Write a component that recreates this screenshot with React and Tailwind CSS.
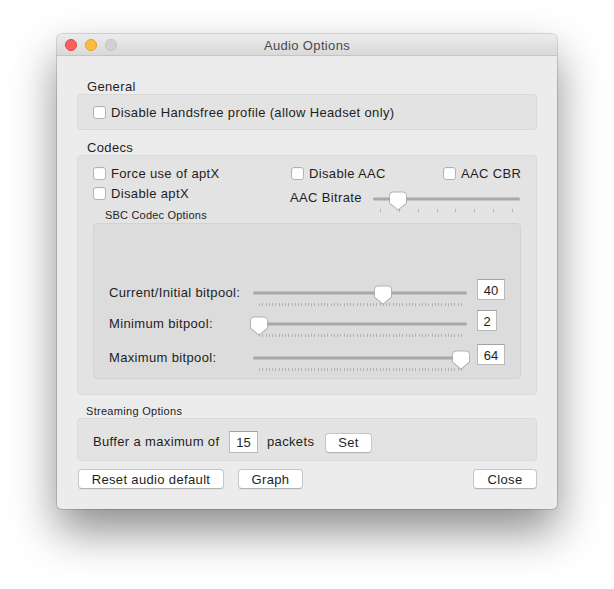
import React from "react";

const font = { fontFamily: '"Liberation Sans", Arial, sans-serif' };

function knobPath(cx) {
  return `M${cx - 5},1 H${cx + 5} Q${cx + 8.5},1 ${cx + 8.5},4.5 V12 L${cx},19 L${cx - 8.5},12 V4.5 Q${cx - 8.5},1 ${cx - 5},1 Z`;
}

function Slider({ width, trackFrom, trackTo, knob, ticks }) {
  return (
    <svg width={width} height={23} className="block shrink-0 overflow-visible">
      <rect x={trackFrom} y={6.5} width={trackTo - trackFrom} height={3} rx={1.5} fill="#a8a8a8" />
      {ticks.map((t, i) => (
        <rect key={i} x={t} y={18} width={1} height={3} fill="#b4b4b4" />
      ))}
      <path d={knobPath(knob)} transform="translate(0,0.8)" fill="rgba(0,0,0,0.12)" />
      <path d={knobPath(knob)} fill="#ffffff" stroke="#a3a3a3" strokeWidth={0.8} />
    </svg>
  );
}

const sbcTicks = Array.from({ length: 63 }, (_, i) => Math.round(9 + (i * 202) / 62));
const aacTicks = Array.from({ length: 8 }, (_, i) => Math.round(10 + i * 18.857));

function Checkbox({ label }) {
  return (
    <div className="flex h-[20px] items-center whitespace-nowrap">
      <span className="block h-[13px] w-[13px] shrink-0 rounded-[3px] border border-[#b2b2b2] bg-white shadow-[inset_0_1px_0_rgba(0,0,0,0.04)]" />
      <span className="ml-[5px] pt-[1px] text-[13px] text-[#1e1e1e]">{label}</span>
    </div>
  );
}

function MacButton({ children, w }) {
  return (
    <div
      className={`flex h-[20px] items-center justify-center rounded-[4px] border border-[#c6c6c6] border-b-[#b4b4b4] bg-white pt-[1px] text-[13px] text-[#1e1e1e] shadow-[0_1px_0_rgba(0,0,0,0.04)] ${w}`}
    >
      {children}
    </div>
  );
}

function BitpoolRow({ label, value, knob, boxW, className }) {
  return (
    <div className={`flex h-[24px] items-start ${className}`}>
      <div className="flex h-[24px] w-[141px] items-center pt-[1px] text-[13px] text-[#1e1e1e]">{label}</div>
      <div className="mt-[5px]">
        <Slider width={220} trackFrom={3} trackTo={217} knob={knob} ticks={sbcTicks} />
      </div>
      <div
        className={`ml-[7px] mt-[-1px] flex h-[21px] items-center justify-center border border-[#b9b9b9] border-t-[#a3a3a3] bg-white pt-[2px] text-[13px] tracking-normal text-[#1e1e1e] ${boxW}`}
      >
        {value}
      </div>
    </div>
  );
}

export default function App() {
  return (
    <div className="min-h-[589px] bg-white pl-[57px] pt-[34px] tracking-[0.35px]" style={font}>
      <div className="w-[500px] rounded-[5px] bg-[#ececec] shadow-[0_0_0_1px_rgba(0,0,0,0.14),0_22px_45px_rgba(0,0,0,0.45)]">
        {/* title bar */}
        <div className="relative flex h-[22px] items-center rounded-t-[5px] border-b border-[#c4c4c4] bg-gradient-to-b from-[#ececec] to-[#d9d9d9] pl-[8px]">
          <span className="block h-[12px] w-[12px] rounded-full border border-[#e0443e] bg-[#fc605b]" />
          <span className="ml-[8px] block h-[12px] w-[12px] rounded-full border border-[#dea123] bg-[#fdbc40]" />
          <span className="ml-[8px] block h-[12px] w-[12px] rounded-full border border-[#c4c4c4] bg-[#d2d2d2]" />
          <div className="absolute inset-0 flex items-center justify-center pt-[3px] text-[13px] text-[#4a4a4a]">
            Audio Options
          </div>
        </div>

        <div className="px-[20px] pb-[20px] pt-[22px]">
          {/* General */}
          <div className="ml-[10px] flex h-[16px] items-center pt-[2px] text-[13px] text-[#1e1e1e]">General</div>
          <div className="flex h-[36px] items-center rounded-[4px] border border-[#d9d9d9] bg-[#e3e3e3] pl-[15px]">
            <Checkbox label="Disable Handsfree profile (allow Headset only)" />
          </div>

          {/* Codecs */}
          <div className="ml-[10px] mt-[9px] flex h-[16px] items-center pt-[2px] text-[13px] text-[#1e1e1e]">Codecs</div>
          <div className="h-[240px] rounded-[4px] border border-[#d9d9d9] bg-[#e3e3e3] px-[15px] pt-[7px]">
            <div className="flex h-[44px]">
              <div className="w-[198px] shrink-0">
                <Checkbox label="Force use of aptX" />
                <Checkbox label="Disable aptX" />
              </div>
              <div className="min-w-0">
                <div className="flex">
                  <div className="w-[152px] shrink-0">
                    <Checkbox label="Disable AAC" />
                  </div>
                  <Checkbox label="AAC CBR" />
                </div>
                <div className="flex items-start">
                  <div className="-ml-[1px] mt-[4px] flex h-[20px] w-[80px] shrink-0 items-center whitespace-nowrap pt-[1px] text-[13px] text-[#1e1e1e]">AAC Bitrate</div>
                  <div className="mt-[8px]">
                    <Slider width={153} trackFrom={3} trackTo={150} knob={28} ticks={aacTicks} />
                  </div>
                </div>
              </div>
            </div>
            <div className="ml-[12px] flex h-[16px] items-center pt-[1px] text-[11px] tracking-[0.2px] text-[#1e1e1e]">SBC Codec Options</div>
            <div className="h-[156px] rounded-[4px] border border-[#d2d2d2] bg-[#dcdcdc] pl-[15px] pt-[56px]">
              <BitpoolRow label="Current/Initial bitpool:" value="40" knob={133} boxW="w-[28px]" />
              <BitpoolRow label="Minimum bitpool:" value="2" knob={9} boxW="w-[20px]" className="mt-[7px]" />
              <BitpoolRow label="Maximum bitpool:" value="64" knob={211} boxW="w-[28px]" className="mt-[10px]" />
            </div>
          </div>

          {/* Streaming */}
          <div className="ml-[9px] mt-[9px] flex h-[14px] items-center pt-[1px] text-[11px] tracking-[0.3px] text-[#1e1e1e]">Streaming Options</div>
          <div className="flex h-[43px] items-center rounded-[4px] border border-[#d9d9d9] bg-[#e3e3e3] pl-[15px] pt-[4px]">
            <span className="w-[128px] pt-[1px] text-[13px] text-[#1e1e1e]">Buffer a maximum of</span>
            <div className="ml-[8px] flex h-[22px] w-[29px] items-center justify-center border border-[#b9b9b9] border-t-[#a3a3a3] bg-white pt-[2px] text-[13px] tracking-normal text-[#1e1e1e]">
              15
            </div>
            <span className="ml-[9px] w-[50px] pt-[1px] text-[13px] text-[#1e1e1e]">packets</span>
            <div className="ml-[8px] mt-[2px]">
              <MacButton w="w-[47px]">Set</MacButton>
            </div>
          </div>

          {/* buttons */}
          <div className="mt-[8px] flex items-center">
            <div className="ml-[1px]">
              <MacButton w="w-[146px]">Reset audio default</MacButton>
            </div>
            <div className="ml-[14px]">
              <MacButton w="w-[65px]">Graph</MacButton>
            </div>
            <div className="ml-auto">
              <MacButton w="w-[64px]">Close</MacButton>
            </div>
          </div>
        </div>
      </div>
    </div>
  );
}
